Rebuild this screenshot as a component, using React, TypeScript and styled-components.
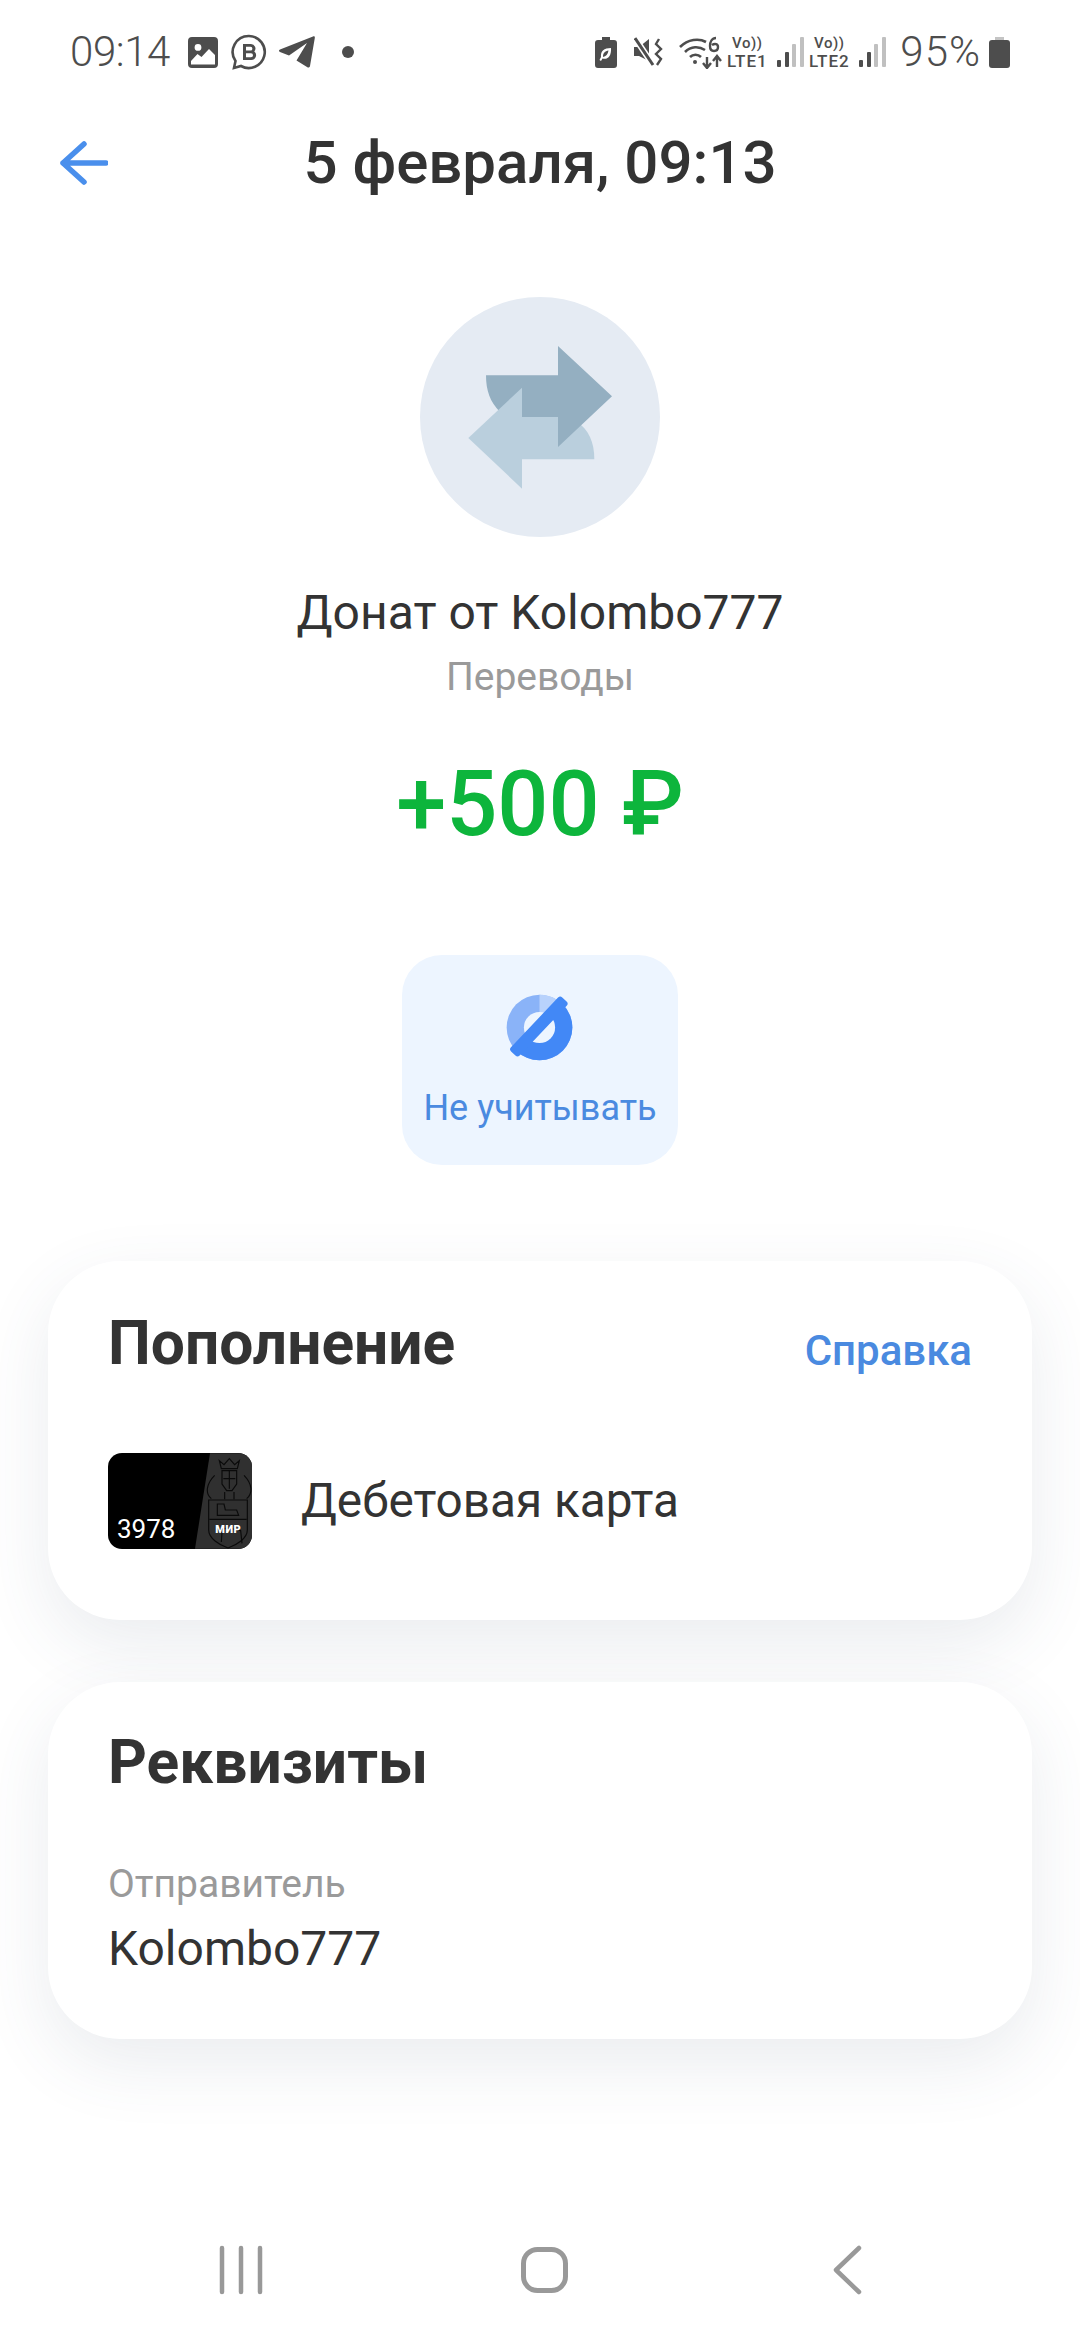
import React from 'react';
import styled, { createGlobalStyle } from 'styled-components';

const GlobalStyle = createGlobalStyle`
  html, body {
    margin: 0;
    padding: 0;
    background: #fff;
  }
  * {
    box-sizing: border-box;
  }
`;

const Page = styled.div`
  width: 1080px;
  height: 2340px;
  display: flex;
  flex-direction: column;
  align-items: center;
  overflow: hidden;
  background: #fff;
  font-family: Roboto, "Liberation Sans", sans-serif;
  color: #333;
`;

const StatusBar = styled.div`
  align-self: stretch;
  height: 104px;
  padding: 0 70px;
  display: flex;
  align-items: center;
  justify-content: space-between;
  color: #4d4d4d;
`;

const StatusGroup = styled.div`
  display: flex;
  align-items: center;
`;

const StatusText = styled.span`
  font-size: 42px;
  font-weight: 300;
  letter-spacing: -0.4px;
  line-height: 48px;
`;

const StatusIcon = styled.svg<{ $left: number }>`
  display: block;
  flex: none;
  margin-left: ${p => p.$left}px;
  fill: #4d4d4d;
`;

const Volte = styled.div`
  width: 40px;
  margin-left: 5px;
  display: flex;
  flex-direction: column;
  align-items: center;
  font-weight: 500;
  line-height: 18px;
  color: #4d4d4d;
`;

const VolteTop = styled.span`
  font-size: 15px;
  letter-spacing: 0.6px;
`;

const VolteBottom = styled.span`
  font-size: 17px;
  letter-spacing: 1px;
`;

const Percent = styled(StatusText)`
  margin-left: 14px;
  letter-spacing: 1px;
`;

const Header = styled.div`
  align-self: stretch;
  height: 118px;
  padding: 0 60px;
  display: grid;
  grid-template-columns: 1fr auto 1fr;
  align-items: center;
`;

const HeaderTitle = styled.h1`
  margin: 0;
  font-size: 60px;
  font-weight: 500;
  line-height: 64px;
`;

const Avatar = styled.div`
  width: 240px;
  height: 240px;
  margin-top: 75px;
  border-radius: 50%;
  background: #e5ebf3;
  flex: none;
`;

const Title = styled.div`
  margin-top: 46px;
  font-size: 48px;
  line-height: 60px;
`;

const Subtitle = styled.div`
  margin-top: 12px;
  font-size: 39px;
  line-height: 44px;
  color: #9a9a9a;
`;

const Amount = styled.div`
  margin-top: 56px;
  font-size: 90px;
  font-weight: 500;
  line-height: 100px;
  color: #0db53c;
`;

const ActionButton = styled.button`
  width: 276px;
  height: 210px;
  margin-top: 100px;
  padding: 36px 0 0;
  border: 0;
  border-radius: 40px;
  background: #edf5ff;
  display: flex;
  flex-direction: column;
  align-items: center;
  font-family: inherit;
  font-size: 36px;
  line-height: 44px;
  color: #4a8ae0;
`;

const ActionLabel = styled.span`
  margin-top: 22px;
`;

const Card = styled.section<{ $top: number; $height: number; $pad: number }>`
  width: 984px;
  height: ${p => p.$height}px;
  margin-top: ${p => p.$top}px;
  padding: ${p => p.$pad}px 60px 0;
  border-radius: 72px;
  background: #fff;
  box-shadow: 0 24px 70px rgba(60, 80, 110, 0.11);
  flex: none;
`;

const CardHead = styled.div`
  height: 66px;
  display: flex;
  align-items: center;
  justify-content: space-between;
`;

const CardTitle = styled.h2`
  margin: 0;
  font-size: 60.5px;
  font-weight: 700;
  line-height: 66px;
`;

const HelpLink = styled.a`
  font-size: 42px;
  font-weight: 500;
  line-height: 50px;
  color: #4a8ae0;
  margin-top: 14px;
`;

const MediaRow = styled.div`
  margin-top: 76px;
  display: flex;
  align-items: center;
  gap: 49px;
`;

const BankCard = styled.div`
  position: relative;
  width: 144px;
  height: 96px;
  border-radius: 14px;
  overflow: hidden;
  background: #000;
  flex: none;
`;

const CardNumber = styled.span`
  position: absolute;
  left: 9px;
  bottom: 5px;
  font-size: 26px;
  line-height: 30px;
  color: #fff;
`;

const CardBrand = styled.span`
  position: absolute;
  right: 11px;
  bottom: 13px;
  font-size: 11px;
  font-weight: 900;
  letter-spacing: 0.4px;
  line-height: 12px;
  color: #fff;
`;

const MediaText = styled.div`
  font-size: 47.7px;
  line-height: 56px;
`;

const FieldLabel = styled.div`
  margin-top: 66px;
  font-size: 39px;
  line-height: 44px;
  color: #9a9a9a;
`;

const FieldValue = styled.div`
  margin-top: 15px;
  font-size: 48px;
  line-height: 56px;
`;

const NavBar = styled.div`
  margin-top: auto;
  height: 140px;
  align-self: stretch;
  padding-left: 8px;
  display: grid;
  grid-template-columns: repeat(3, 303px);
  justify-content: center;
  justify-items: center;
  align-items: center;
`;

const ArrowExchange = () => (
  <svg width="240" height="240" viewBox="60 50 720 720">
    <path d="M366 410H474L530 425C565 445 583 485 583 537H366Z" fill="#bacfdd" />
    <path d="M258 285H474V197L636 348L474 500V410H366L300 395C270 365 258 330 258 285Z" fill="#94afc1" />
    <path d="M366 322L205 473L366 625Z" fill="#bacfdd" />
  </svg>
);

const IgnoreIcon = () => (
  <svg width="73" height="73" viewBox="340 150 220 220">
    <defs>
      <clipPath id="lowerHalf">
        <path d="M330 370L540 160L600 160L600 400L330 400Z" />
      </clipPath>
    </defs>
    <circle cx="447" cy="260" r="99" fill="#8ab3f8" />
    <path d="M447 260V161C470 161 490 168 506 180Z" fill="#b8d2fc" />
    <circle cx="447" cy="260" r="99" fill="#4288f6" clipPath="url(#lowerHalf)" />
    <circle cx="447" cy="260" r="47" fill="#edf5ff" />
    <rect x="333" y="239" width="224" height="36" rx="9" fill="#4288f6" transform="rotate(-46.500 445 257)" />
  </svg>
);

const CardArt = () => (
  <svg width="144" height="96" viewBox="54 70 432 286" style={{ display: 'block' }}>
    <path d="M360 70H486V356H315Z" fill="#303030" />
    <g fill="none" stroke="#0a0a0a" strokeWidth="3.500">
      <path d="M388 92L402 104L418 86L434 104L448 92L442 116H394Z" />
      <path d="M396 122H440V162L426 182H410L396 162Z" />
      <path d="M418 122V176M400 146H436" />
      <path d="M356 210H472V300C472 325 440 345 414 354C388 345 356 325 356 300Z" />
      <path d="M358 268H470" />
      <path d="M382 222V256H446L440 240H406L402 222Z" />
      <path d="M384 300C400 292 430 296 452 302L456 340M396 306L394 336" />
      <path d="M374 136C350 160 344 190 364 206M462 136C486 160 490 190 470 206" />
      <path d="M404 186V208M432 186V208" />
    </g>
  </svg>
);

const App: React.FC = () => {
  return (
    <Page>
      <GlobalStyle />
      <StatusBar>
        <StatusGroup>
          <StatusText>09:14</StatusText>
          <StatusIcon $left={18} width="30" height="31" viewBox="0 0 30 31">
            <path fillRule="evenodd" d="M4 0H26a4 4 0 0 1 4 4V27a4 4 0 0 1-4 4H4a4 4 0 0 1-4-4V4a4 4 0 0 1 4-4ZM10 7a3.400 3.400 0 1 0 0 6.800a3.400 3.400 0 1 0 0-6.800ZM3 24V27.500H27V18L21 12L13.500 20L9.500 17Z" />
          </StatusIcon>
          <StatusIcon $left={13} width="36" height="37" viewBox="0 0 36 37">
            <path fill="none" stroke="#4d4d4d" strokeWidth="2.600" d="M18 2a16 16 0 1 1-8 30l-7 2l1.500-7A16 16 0 0 1 18 2Z" />
            <path fillRule="evenodd" d="M12 10H20a4.500 4.500 0 0 1 3.300 7.500A4.800 4.800 0 0 1 20 26H12ZM15 12.800V16.600H19.500a1.900 1.900 0 0 0 0-3.800ZM15 19.200V23.200H20a2 2 0 0 0 0-4Z" />
          </StatusIcon>
          <StatusIcon $left={12} width="36" height="32" viewBox="0 0 36 32">
            <path d="M34 0.500C35.500 0 36 1 35.800 2L31 30C30.700 31.500 29.500 32 28 31L17.500 24.500L28 7L10 19.500L1 16C-0.500 15.300 -0.300 14 1 13.500Z" />
          </StatusIcon>
          <StatusIcon $left={27} width="12" height="12" viewBox="0 0 12 12">
            <circle cx="6" cy="6" r="6" />
          </StatusIcon>
        </StatusGroup>
        <StatusGroup>
          <StatusIcon $left={0} width="22" height="31" viewBox="0 0 22 31">
            <path fillRule="evenodd" d="M7 0H15V3H19a3 3 0 0 1 3 3V28a3 3 0 0 1-3 3H3a3 3 0 0 1-3-3V6a3 3 0 0 1 3-3H7ZM16 11C9 11 5.500 14 6 20L4.500 23L6 24L7.500 21.500C13 23 16.500 19 16 11ZM13.500 13.500C13 17 11 19.500 8 20C8 16 10 14 13.500 13.500Z" />
          </StatusIcon>
          <StatusIcon $left={17} width="30" height="30" viewBox="0 0 30 30">
            <path d="M0 10H5L15 2V24L5 19H0Z" />
            <path d="M1 1L19 28" stroke="#fff" strokeWidth="6" />
            <path d="M1 1L19 28" stroke="#4d4d4d" strokeWidth="3" />
            <path d="M25 2L22 7L27 12L22 17L27 22L23 28" fill="none" stroke="#4d4d4d" strokeWidth="2.400" />
          </StatusIcon>
          <StatusIcon $left={15} width="43" height="33" viewBox="0 0 43 33">
            <g fill="none" stroke="#4d4d4d" strokeWidth="2.600">
              <path d="M1 11C9 3 20 2 27 6" />
              <path d="M6 16C12 10 20 10 26 14" />
              <path d="M11 21C14 18 19 18 22 21" />
            </g>
            <circle cx="16" cy="26" r="2" />
            <path d="M28 21V31M24 27L28 32L32 27M38 31V21M34 25L38 20L42 25" fill="none" stroke="#4d4d4d" strokeWidth="2.400" />
            <path d="M37 2C33 2 31 6 31 10C31 14 33 15 35 15C38 15 39 13 39 11C39 8 36 7 33 9" fill="none" stroke="#4d4d4d" strokeWidth="2.400" />
          </StatusIcon>
          <Volte>
            <VolteTop>Vo))</VolteTop>
            <VolteBottom>LTE1</VolteBottom>
          </Volte>
          <StatusIcon $left={10} width="27" height="30" viewBox="0 0 27 30">
            <rect x="0" y="23" width="4" height="7" rx="1" />
            <rect x="8" y="15" width="4" height="15" rx="1" />
            <rect x="15" y="7" width="4" height="23" rx="1" fill="#c0c0c0" />
            <rect x="23" y="0" width="4" height="30" rx="1" fill="#c0c0c0" />
          </StatusIcon>
          <Volte>
            <VolteTop>Vo))</VolteTop>
            <VolteBottom>LTE2</VolteBottom>
          </Volte>
          <StatusIcon $left={10} width="27" height="30" viewBox="0 0 27 30">
            <rect x="0" y="23" width="4" height="7" rx="1" />
            <rect x="8" y="15" width="4" height="15" rx="1" />
            <rect x="15" y="7" width="4" height="23" rx="1" fill="#c0c0c0" />
            <rect x="23" y="0" width="4" height="30" rx="1" fill="#c0c0c0" />
          </StatusIcon>
          <Percent>95%</Percent>
          <StatusIcon $left={8} width="21" height="31" viewBox="0 0 21 31">
            <rect x="6" y="0" width="9" height="4" fill="#c4c4c4" />
            <rect x="0" y="3" width="21" height="28" rx="3" />
          </StatusIcon>
        </StatusGroup>
      </StatusBar>

      <Header>
        <svg width="48" height="44" viewBox="0 0 48 44">
          <path d="M46 22H3M24 3L3 22L24 41" fill="none" stroke="#4a8fec" strokeWidth="5.500" strokeLinecap="round" strokeLinejoin="round" />
        </svg>
        <HeaderTitle>5 февраля, 09:13</HeaderTitle>
      </Header>

      <Avatar>
        <ArrowExchange />
      </Avatar>
      <Title>Донат от Kolombo777</Title>
      <Subtitle>Переводы</Subtitle>
      <Amount>+500 ₽</Amount>

      <ActionButton type="button">
        <IgnoreIcon />
        <ActionLabel>Не учитывать</ActionLabel>
      </ActionButton>

      <Card $top={96} $height={359} $pad={50}>
        <CardHead>
          <CardTitle>Пополнение</CardTitle>
          <HelpLink>Справка</HelpLink>
        </CardHead>
        <MediaRow>
          <BankCard>
            <CardArt />
            <CardNumber>3978</CardNumber>
            <CardBrand>МИР</CardBrand>
          </BankCard>
          <MediaText>Дебетовая карта</MediaText>
        </MediaRow>
      </Card>

      <Card $top={62} $height={357} $pad={48}>
        <CardHead>
          <CardTitle>Реквизиты</CardTitle>
        </CardHead>
        <FieldLabel>Отправитель</FieldLabel>
        <FieldValue>Kolombo777</FieldValue>
      </Card>

      <NavBar>
        <svg width="46" height="50" viewBox="0 0 46 50">
          <path d="M4 3V47M23 3V47M42 3V47" fill="none" stroke="#999" strokeWidth="4.500" strokeLinecap="round" />
        </svg>
        <svg width="47" height="46" viewBox="0 0 47 46">
          <rect x="2.500" y="2.500" width="42" height="41" rx="14" fill="none" stroke="#999" strokeWidth="5" />
        </svg>
        <svg width="30" height="50" viewBox="0 0 30 50">
          <path d="M27 3L4 25L27 47" fill="none" stroke="#999" strokeWidth="4.500" strokeLinecap="round" strokeLinejoin="round" />
        </svg>
      </NavBar>
    </Page>
  );
};

export default App;
